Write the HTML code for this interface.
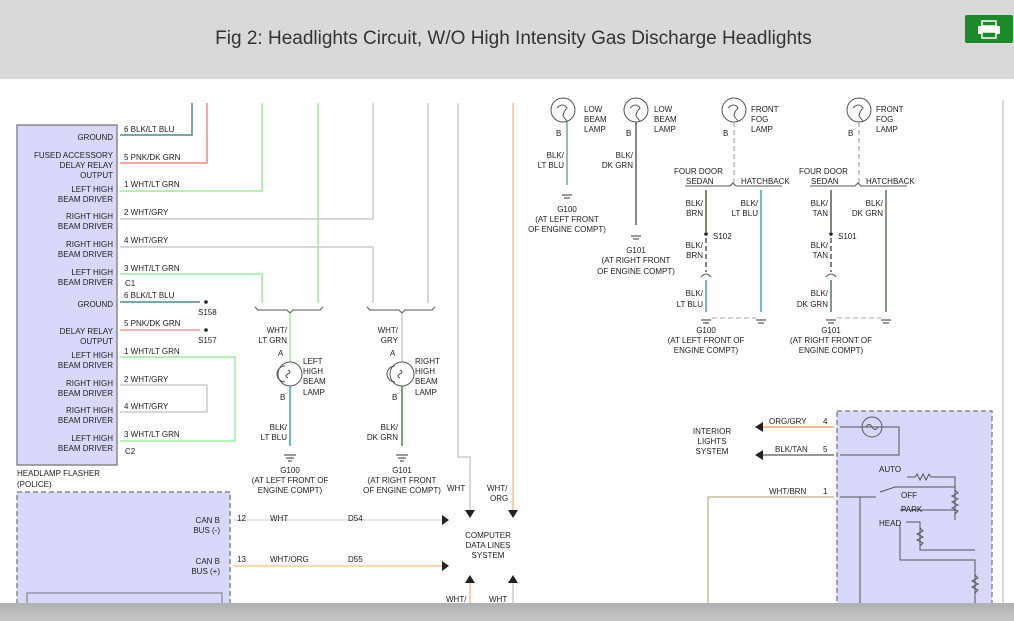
<!DOCTYPE html>
<html><head><meta charset="utf-8"><style>
html,body{margin:0;padding:0;width:1014px;height:621px;overflow:hidden;background:#fff;font-family:"Liberation Sans",sans-serif}
.hdr{position:absolute;left:0;top:0;width:1014px;height:79px;background:#d9d9d9}
.title{position:absolute;left:0;width:1027px;top:28px;text-align:center;font-size:19px;color:#333}
.pr{position:absolute;left:965px;top:15px;width:48px;height:28px;background:#1d8a2a;border-radius:2px}
.bot{position:absolute;left:0;top:603px;width:1014px;height:18px;background:linear-gradient(#aeb0b2,#c4c6c8)}
svg{position:absolute;left:0;top:79px}
svg text{font-family:"Liberation Sans",sans-serif;font-size:8px;fill:#222}
</style></head><body>
<div class="hdr"><div class="title">Fig 2: Headlights Circuit, W/O High Intensity Gas Discharge Headlights</div>
<div class="pr"><svg width="48" height="28" style="position:absolute;left:0;top:0"><rect x="17" y="6" width="14" height="5" fill="none" stroke="#fff" stroke-width="1.5"/><rect x="13" y="11" width="22" height="8" rx="1" fill="#fff"/><rect x="17" y="17" width="14" height="6" fill="#1d8a2a" stroke="#fff" stroke-width="1.5"/></svg></div></div>
<svg width="1014" height="524" viewBox="0 79 1014 524">
<g fill="none" stroke-width="1.5">
<line x1="1003" y1="100" x2="1003" y2="603" stroke="#ccc"/>
<rect x="17" y="125" width="100" height="340" fill="#d8d8fa" stroke="#888"/>
<path d="M120 135H192V103" stroke="#4a8a8a"/>
<path d="M120 163H207V103" stroke="#e88"/>
<path d="M120 191H262V103" stroke="#9e9"/>
<path d="M120 219H373V103" stroke="#ccc"/>
<path d="M120 247H373V303" stroke="#ccc"/>
<path d="M120 274H262V303" stroke="#9e9"/>
<line x1="318" y1="103" x2="318" y2="303" stroke="#9e9"/>
<line x1="428" y1="103" x2="428" y2="303" stroke="#ccc"/>
<path d="M120 302H200" stroke="#4a8a8a"/>
<path d="M120 330H200" stroke="#e99"/>
<path d="M120 357H235V441H120" stroke="#9e9"/>
<path d="M120 385H207V412H120" stroke="#ccc"/>
<path d="M255 307l3 3H287l3 3 3-3H320l3-3M367 307l3 3H399l3 3 3-3H432l3-3" stroke="#555" stroke-width="1"/>
<line x1="290" y1="313" x2="290" y2="362" stroke="#9e9"/>
<line x1="402" y1="313" x2="402" y2="362" stroke="#ccc"/>
<circle cx="290" cy="374" r="12" stroke="#555" stroke-width="1"/>
<circle cx="402" cy="374" r="12" stroke="#555" stroke-width="1"/>
<path d="M285 366a8 8 0 0 0 0 16M395 366a8 8 0 0 0 0 16M288 370q4 2 0 4q-4 2 0 4M400 370q4 2 0 4q-4 2 0 4" stroke="#555" stroke-width="1"/>
<line x1="290" y1="386" x2="290" y2="446" stroke="#3aa"/>
<line x1="402" y1="386" x2="402" y2="446" stroke="#484"/>
<path d="M458 103V457H470V510" stroke="#ccc"/>
<line x1="513" y1="103" x2="513" y2="510" stroke="#fb8"/>
<rect x="17" y="492" width="213" height="115" fill="#d8d8fa" stroke="#888" stroke-dasharray="5 3"/>
<rect x="27" y="593" width="195" height="14" fill="#d8d8fa" stroke="#777" stroke-width="1"/>
<line x1="233" y1="520" x2="446" y2="520" stroke="#ddd"/>
<line x1="233" y1="566" x2="446" y2="566" stroke="#fc9"/>
<line x1="470" y1="583" x2="470" y2="603" stroke="#fb8"/>
<line x1="513" y1="583" x2="513" y2="603" stroke="#ccc"/>
<circle cx="563" cy="110" r="12" stroke="#555" stroke-width="1"/>
<circle cx="636" cy="110" r="12" stroke="#555" stroke-width="1"/>
<circle cx="734" cy="110" r="12" stroke="#555" stroke-width="1"/>
<circle cx="859" cy="110" r="12" stroke="#555" stroke-width="1"/>
<path d="M557 108q6 -6 10 0q-4 4 -4 8l4 5M630 108q6 -6 10 0q-4 4 -4 8l4 5M728 108q6 -6 10 0q-4 4 -4 8l4 5M853 108q6 -6 10 0q-4 4 -4 8l4 5" stroke="#555" stroke-width="1"/>
<line x1="567" y1="122" x2="567" y2="185" stroke="#6aa"/>
<line x1="636" y1="122" x2="636" y2="225" stroke="#565"/>
<line x1="734" y1="122" x2="734" y2="183" stroke="#999" stroke-width="1" stroke-dasharray="5 3"/>
<line x1="859" y1="122" x2="859" y2="183" stroke="#999" stroke-width="1" stroke-dasharray="5 3"/>
<path d="M685 186H730l3-3 3 3H782M810 186H855l3-3 3 3H907" stroke="#555" stroke-width="1"/>
<line x1="706" y1="190" x2="706" y2="232" stroke="#654"/>
<line x1="706" y1="238" x2="706" y2="272" stroke="#654" stroke-dasharray="5 3"/>
<line x1="706" y1="280" x2="706" y2="312" stroke="#3aa"/>
<line x1="761" y1="190" x2="761" y2="312" stroke="#3aa"/>
<line x1="831" y1="190" x2="831" y2="232" stroke="#654"/>
<line x1="831" y1="238" x2="831" y2="272" stroke="#654" stroke-dasharray="5 3"/>
<line x1="831" y1="280" x2="831" y2="312" stroke="#575"/>
<line x1="886" y1="190" x2="886" y2="312" stroke="#575"/>
<path d="M712 318H756M837 318H881" stroke="#aaa" stroke-width="1" stroke-dasharray="5 3"/>
<path d="M701 277q5-6 10 0M826 277q5-6 10 0" stroke="#555" stroke-width="1"/>
<rect x="837" y="411" width="155" height="200" fill="#d8d8fa" stroke="#888" stroke-dasharray="5 3"/>
<line x1="760" y1="427" x2="834" y2="427" stroke="#fa6"/>
<line x1="760" y1="455" x2="834" y2="455" stroke="#777"/>
<path d="M708 603V497H834" stroke="#cb9"/>
<circle cx="872" cy="427" r="10" stroke="#555" stroke-width="1"/>
<path d="M840 427H899V455H840M866 427q3-5 6 0q3 5 6 0" stroke="#555" stroke-width="1"/>
<path d="M840 497H876M880 492L895 487H955V490M907 477H915l2-3 3 6 3-6 3 6 3-6 2 3H955V520M900 510H955M906 522H920V550H975M860 497V603M900 525V560H975V603M955 490l3 3-6 3 6 3-6 3 6 3-6 3 6 3-3 3M920 528l3 3-6 3 6 3-6 3 6 3-3 3M975 575l3 3-6 3 6 3-6 3 6 3-3 3" stroke="#555" stroke-width="1"/>
</g>
<g fill="#222">
<circle cx="206" cy="302" r="1.8"/><circle cx="206" cy="330" r="1.8"/>
<circle cx="706" cy="234" r="1.8"/><circle cx="831" cy="234" r="1.8"/>
<path d="M442 515l7 5-7 5zM442 561l7 5-7 5zM465 510l5 8 5-8zM508 510l5 8 5-8zM465 583l5-8 5 8zM508 583l5-8 5 8zM755 427l8-5v10zM755 455l8-5v10z"/>
</g>
<g stroke="#333" stroke-width="1">
<path d="M284 455h12M286 458h8M288 461h4M562 195h10M564 198h6M631 236h10M633 239h6M701 320h10M703 323h6M756 320h10M758 323h6M826 320h10M828 323h6M881 320h10M883 323h6M396 455h12M398 458h8M400 461h4"/>
</g>
<g text-anchor="end">
<text x="113" y="140">GROUND</text>
<text x="113" y="158">FUSED ACCESSORY</text><text x="113" y="168">DELAY RELAY</text><text x="113" y="178">OUTPUT</text>
<text x="113" y="192">LEFT HIGH</text><text x="113" y="202">BEAM DRIVER</text>
<text x="113" y="219">RIGHT HIGH</text><text x="113" y="229">BEAM DRIVER</text>
<text x="113" y="247">RIGHT HIGH</text><text x="113" y="257">BEAM DRIVER</text>
<text x="113" y="275">LEFT HIGH</text><text x="113" y="285">BEAM DRIVER</text>
<text x="113" y="307">GROUND</text>
<text x="113" y="334">DELAY RELAY</text><text x="113" y="344">OUTPUT</text>
<text x="113" y="358">LEFT HIGH</text><text x="113" y="368">BEAM DRIVER</text>
<text x="113" y="386">RIGHT HIGH</text><text x="113" y="396">BEAM DRIVER</text>
<text x="113" y="413">RIGHT HIGH</text><text x="113" y="423">BEAM DRIVER</text>
<text x="113" y="441">LEFT HIGH</text><text x="113" y="451">BEAM DRIVER</text>
<text x="220" y="523">CAN B</text><text x="220" y="533">BUS (-)</text>
<text x="220" y="564">CAN B</text><text x="220" y="574">BUS (+)</text>
<text x="287" y="333">WHT/</text><text x="287" y="343">LT GRN</text>
<text x="398" y="333">WHT/</text><text x="398" y="343">GRY</text>
<text x="287" y="430">BLK/</text><text x="287" y="440">LT BLU</text>
<text x="398" y="430">BLK/</text><text x="398" y="440">DK GRN</text>
<text x="564" y="158">BLK/</text><text x="564" y="168">LT BLU</text>
<text x="633" y="158">BLK/</text><text x="633" y="168">DK GRN</text>
<text x="703" y="206">BLK/</text><text x="703" y="216">BRN</text>
<text x="703" y="248">BLK/</text><text x="703" y="258">BRN</text>
<text x="703" y="296">BLK/</text><text x="703" y="307">LT BLU</text>
<text x="758" y="206">BLK/</text><text x="758" y="216">LT BLU</text>
<text x="828" y="206">BLK/</text><text x="828" y="216">TAN</text>
<text x="828" y="248">BLK/</text><text x="828" y="258">TAN</text>
<text x="828" y="296">BLK/</text><text x="828" y="307">DK GRN</text>
<text x="883" y="206">BLK/</text><text x="883" y="216">DK GRN</text>
</g>
<text x="124" y="132">6 BLK/LT BLU</text><text x="124" y="160">5  PNK/DK GRN</text>
<text x="124" y="187">1  WHT/LT GRN</text><text x="124" y="215">2  WHT/GRY</text>
<text x="124" y="243">4  WHT/GRY</text><text x="124" y="271">3  WHT/LT GRN</text>
<text x="125" y="286">C1</text><text x="124" y="298">6 BLK/LT BLU</text>
<text x="124" y="326">5  PNK/DK GRN</text><text x="198" y="315">S158</text><text x="198" y="343">S157</text>
<text x="124" y="354">1  WHT/LT GRN</text><text x="124" y="382">2  WHT/GRY</text>
<text x="124" y="409">4  WHT/GRY</text><text x="124" y="437">3  WHT/LT GRN</text><text x="125" y="454">C2</text>
<text x="17" y="476">HEADLAMP FLASHER</text><text x="17" y="487">(POLICE)</text>
<text x="278" y="356">A</text><text x="390" y="356">A</text><text x="280" y="400">B</text><text x="392" y="400">B</text>
<text x="303" y="364">LEFT</text><text x="303" y="374">HIGH</text><text x="303" y="384">BEAM</text><text x="303" y="395">LAMP</text>
<text x="415" y="364">RIGHT</text><text x="415" y="374">HIGH</text><text x="415" y="384">BEAM</text><text x="415" y="395">LAMP</text>
<g text-anchor="middle">
<text x="290" y="473">G100</text><text x="290" y="483">(AT LEFT FRONT OF</text><text x="290" y="493">ENGINE COMPT)</text>
<text x="402" y="473">G101</text><text x="402" y="483">(AT RIGHT FRONT</text><text x="402" y="493">OF ENGINE COMPT)</text>
<text x="488" y="538">COMPUTER</text><text x="488" y="548">DATA LINES</text><text x="488" y="558">SYSTEM</text>
<text x="567" y="212">G100</text><text x="567" y="222">(AT LEFT FRONT</text><text x="567" y="232">OF ENGINE COMPT)</text>
<text x="636" y="253">G101</text><text x="636" y="263">(AT RIGHT FRONT</text><text x="636" y="274">OF ENGINE COMPT)</text>
<text x="706" y="333">G100</text><text x="706" y="343">(AT LEFT FRONT OF</text><text x="706" y="353">ENGINE COMPT)</text>
<text x="831" y="333">G101</text><text x="831" y="343">(AT RIGHT FRONT OF</text><text x="831" y="353">ENGINE COMPT)</text>
<text x="712" y="434">INTERIOR</text><text x="712" y="444">LIGHTS</text><text x="712" y="454">SYSTEM</text>
</g>
<text x="447" y="491">WHT</text><text x="487" y="491">WHT/</text><text x="490" y="501">ORG</text>
<text x="237" y="521">12</text><text x="270" y="521">WHT</text><text x="348" y="521">D54</text>
<text x="237" y="562">13</text><text x="270" y="562">WHT/ORG</text><text x="348" y="562">D55</text>
<text x="446" y="602">WHT/</text><text x="489" y="602">WHT</text>
<text x="584" y="112">LOW</text><text x="584" y="122">BEAM</text><text x="584" y="132">LAMP</text>
<text x="654" y="112">LOW</text><text x="654" y="122">BEAM</text><text x="654" y="132">LAMP</text>
<text x="751" y="112">FRONT</text><text x="751" y="122">FOG</text><text x="751" y="132">LAMP</text>
<text x="876" y="112">FRONT</text><text x="876" y="122">FOG</text><text x="876" y="132">LAMP</text>
<text x="556" y="136">B</text><text x="626" y="136">B</text><text x="723" y="136">B</text><text x="848" y="136">B</text>
<text x="674" y="174">FOUR DOOR</text><text x="686" y="184">SEDAN</text><text x="741" y="184">HATCHBACK</text>
<text x="799" y="174">FOUR DOOR</text><text x="811" y="184">SEDAN</text><text x="866" y="184">HATCHBACK</text>
<text x="713" y="239">S102</text><text x="838" y="239">S101</text>
<text x="769" y="424">ORG/GRY</text><text x="823" y="424">4</text>
<text x="775" y="452">BLK/TAN</text><text x="823" y="452">5</text>
<text x="769" y="494">WHT/BRN</text><text x="823" y="494">1</text>
<text x="879" y="472">AUTO</text><text x="901" y="498">OFF</text><text x="901" y="512">PARK</text><text x="879" y="526">HEAD</text>
</svg>
<div class="bot"></div>
</body></html>
